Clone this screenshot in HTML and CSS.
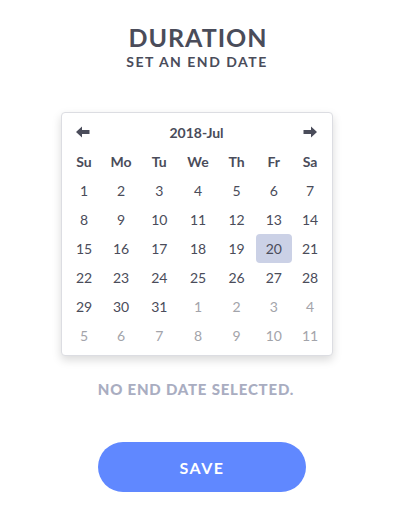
FILE: index.html
```html
<!DOCTYPE html>
<html>
<head>
<meta charset="utf-8">
<link rel="stylesheet" href="styles.css">
</head>
<body>
<div class="page">
  <h1 class="title">DURATION</h1>
  <div class="subtitle">SET AN END DATE</div>
  <div class="card">
    <div class="cal-head">
      <span class="arrow"><svg width="14" height="12" viewBox="0 0 14 12"><path d="M0 6 L6 0.5 L6 4 L13.5 4 L13.5 8 L6 8 L6 11.5 Z" fill="#4a4c5a"/></svg></span>
      <span class="month">2018-Jul</span>
      <span class="arrow"><svg width="14" height="12" viewBox="0 0 14 12"><path d="M14 6 L8 0.5 L8 4 L0.5 4 L0.5 8 L8 8 L8 11.5 Z" fill="#4a4c5a"/></svg></span>
    </div>
    <div class="grid">
      <div class="wd">Su</div><div class="wd">Mo</div><div class="wd">Tu</div><div class="wd">We</div><div class="wd">Th</div><div class="wd">Fr</div><div class="wd">Sa</div>
      <div class="d">1</div><div class="d">2</div><div class="d">3</div><div class="d">4</div><div class="d">5</div><div class="d">6</div><div class="d">7</div>
      <div class="d">8</div><div class="d">9</div><div class="d">10</div><div class="d">11</div><div class="d">12</div><div class="d">13</div><div class="d">14</div>
      <div class="d">15</div><div class="d">16</div><div class="d">17</div><div class="d">18</div><div class="d">19</div><div class="d sel">20</div><div class="d">21</div>
      <div class="d">22</div><div class="d">23</div><div class="d">24</div><div class="d">25</div><div class="d">26</div><div class="d">27</div><div class="d">28</div>
      <div class="d">29</div><div class="d">30</div><div class="d">31</div><div class="d o">1</div><div class="d o">2</div><div class="d o">3</div><div class="d o">4</div>
      <div class="d o">5</div><div class="d o">6</div><div class="d o">7</div><div class="d o">8</div><div class="d o">9</div><div class="d o">10</div><div class="d o">11</div>
    </div>
  </div>
  <div class="status">NO END DATE SELECTED.</div>
  <button class="save">SAVE</button>
</div>
</body>
</html>
```
FILE: styles.css
```css
html, body {
  margin: 0;
  padding: 0;
  background: #fff;
}
body {
  font-family: Lato, "Open Sans", sans-serif;
  color: #4a4c5a;
}
.page {
  width: 400px;
  display: flex;
  flex-direction: column;
  align-items: center;
}
.title {
  margin: 21px 0 0 -4px;
  font-size: 25px;
  line-height: 32px;
  font-weight: 700;
  letter-spacing: 1px;
  color: #4a4c5a;
}
.subtitle {
  margin-top: -1px;
  margin-left: -6px;
  font-size: 14px;
  line-height: 19px;
  font-weight: 700;
  letter-spacing: 1.5px;
  color: #4a4c5a;
}
.card {
  margin-top: 41px;
  margin-left: -6px;
  width: 272px;
  box-sizing: border-box;
  border: 1px solid #dcdde2;
  border-radius: 4px;
  box-shadow: 0 4px 10px rgba(0,0,0,0.15);
  padding: 4px 4px 5px 4px;
  background: #fff;
}
.cal-head {
  height: 30px;
  display: flex;
  align-items: center;
  justify-content: space-between;
  padding: 0 11px 0 10px;
}
.arrow {
  display: flex;
  align-items: center;
}
.month {
  font-size: 14px;
  font-weight: 700;
  color: #4a4c5a;
}
.grid {
  display: grid;
  grid-template-columns: 36px 38px 38.5px 39px 38px 36.5px 36px;
  grid-auto-rows: 29px;
}
.wd, .d {
  display: flex;
  align-items: center;
  justify-content: center;
  font-size: 14px;
}
.wd {
  font-weight: 700;
}
.d {
  border-radius: 4px;
}
.d.o {
  color: #a3a4aa;
}
.d.sel {
  background: #cbd1e6;
}
.status {
  margin-top: 23px;
  margin-left: -8px;
  font-size: 15px;
  line-height: 20px;
  font-weight: 900;
  letter-spacing: 0.8px;
  color: #a9adc1;
}
.save {
  margin-top: 43px;
  margin-left: 4px;
  width: 208px;
  height: 50px;
  border: none;
  border-radius: 25px;
  background: #6088ff;
  color: #fff;
  font-family: Lato, sans-serif;
  font-size: 16px;
  font-weight: 700;
  letter-spacing: 1.5px;
}
```
